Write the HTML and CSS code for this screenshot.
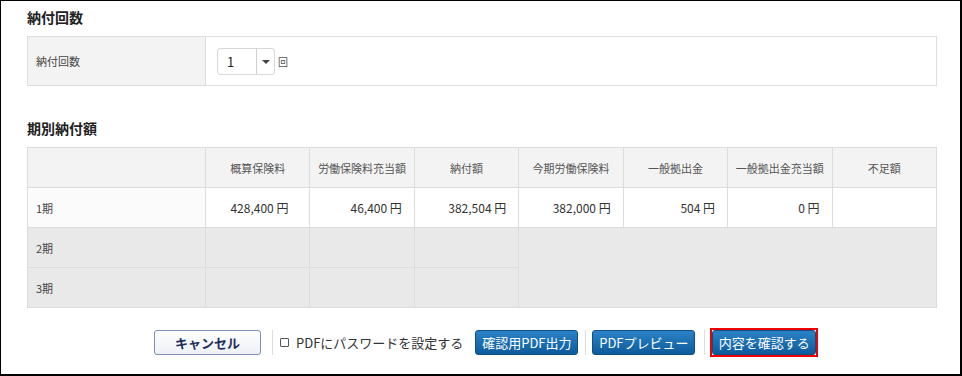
FILE: index.html
```
<!DOCTYPE html>
<html lang="ja">
<head>
    <meta charset="UTF-8">
    <title>納付回数</title>
    <link rel="stylesheet" href="styles.css">
</head>
<body>
<div class="frame">

    <h2 class="section-title">納付回数</h2>
    <div class="field-box">
        <div class="field-label">納付回数</div>
        <div class="field-value">
            <div class="select-box">
                <span class="select-text">1</span>
                <span class="select-arrow"></span>
            </div>
            <span class="unit">回</span>
        </div>
    </div>

    <h2 class="section-title second">期別納付額</h2>
    <table class="pay-table">
        <colgroup>
            <col class="col-label">
            <col><col><col><col><col><col><col>
        </colgroup>
        <thead>
            <tr>
                <th></th>
                <th>概算保険料</th>
                <th>労働保険料充当額</th>
                <th>納付額</th>
                <th>今期労働保険料</th>
                <th>一般拠出金</th>
                <th>一般拠出金充当額</th>
                <th>不足額</th>
            </tr>
        </thead>
        <tbody>
            <tr class="row-active">
                <td class="label">1期</td>
                <td class="num first">428,400 円</td>
                <td class="num">46,400 円</td>
                <td class="num">382,504 円</td>
                <td class="num">382,000 円</td>
                <td class="num">504 円</td>
                <td class="num">0 円</td>
                <td class="num"></td>
            </tr>
            <tr class="row-off">
                <td class="label">2期</td>
                <td></td>
                <td></td>
                <td></td>
                <td rowspan="2" colspan="4" class="merged"></td>
            </tr>
            <tr class="row-off">
                <td class="label">3期</td>
                <td></td>
                <td></td>
                <td></td>
            </tr>
        </tbody>
    </table>

    <div class="actions">
        <button class="btn btn-cancel">キャンセル</button>
        <span class="sep"></span>
        <label class="pw-check"><span class="box"></span>PDFにパスワードを設定する</label>
        <button class="btn btn-blue">確認用PDF出力</button>
        <span class="sep sep-a"></span>
        <button class="btn btn-blue">PDFプレビュー</button>
        <span class="sep sep-b"></span>
        <span class="highlight"><button class="btn btn-blue">内容を確認する</button></span>
    </div>

</div>
</body>
</html>
```

FILE: styles.css
```
body {
    margin: 0;
    font-family: "Noto Sans CJK JP", "Noto Sans", sans-serif;
    color: #333;
    background-color: #fff;
}

.frame {
    width: 962px;
    height: 376px;
    box-sizing: border-box;
    border: 1px solid #000;
    border-right-width: 2px;
    border-bottom-width: 2px;
    padding: 6px 0 0 26px;
}

.section-title {
    margin: 0 0 9px;
    font-size: 14px;
    line-height: 20px;
    font-weight: 700;
    color: #222;
}

.section-title.second {
    margin-top: 32px;
}

/* 納付回数 */
.field-box {
    display: flex;
    width: 910px;
    height: 50px;
    box-sizing: border-box;
    border: 1px solid #dedede;
}

.field-label {
    width: 178px;
    box-sizing: border-box;
    background-color: #f3f3f3;
    border-right: 1px solid #dedede;
    font-size: 11px;
    color: #444;
    padding-left: 8px;
    display: flex;
    align-items: center;
}

.field-value {
    display: flex;
    align-items: center;
    padding-left: 11px;
}

.select-box {
    display: flex;
    width: 58px;
    height: 27px;
    box-sizing: border-box;
    border: 1px solid #d8d8d8;
    border-radius: 3px;
    background-color: #fff;
}

.select-text {
    width: 39px;
    border-right: 1px solid #cfcfcf;
    font-size: 13px;
    line-height: 25px;
    padding-left: 9px;
    box-sizing: border-box;
    color: #222;
}

.select-arrow {
    flex: 1;
    position: relative;
}

.select-arrow::after {
    content: "";
    position: absolute;
    left: 5px;
    top: 11px;
    border-left: 4px solid transparent;
    border-right: 4px solid transparent;
    border-top: 4px solid #444;
}

.unit {
    font-size: 10px;
    margin-left: 3px;
    color: #555;
}

/* 期別納付額 */
.pay-table {
    width: 910px;
    border-collapse: collapse;
    table-layout: fixed;
    font-size: 11px;
}

.col-label {
    width: 178px;
}

.pay-table th,
.pay-table td {
    border: 1px solid #dcdcdc;
    height: 39px;
    padding: 0;
}

.pay-table th {
    background-color: #f3f3f3;
    font-weight: 400;
    color: #555;
    text-align: center;
}

.pay-table td.label {
    padding-left: 8px;
    color: #444;
}

.pay-table td.num {
    text-align: right;
    padding-right: 12px;
    font-size: 12px;
    color: #333;
}

.pay-table td.num.first {
    padding-right: 21px;
}

.row-active td {
    background-color: #fff;
}

.row-active td.label {
    background-color: #fbfbfb;
}

.row-off td {
    background-color: #e9e9e9;
}

/* ボタン */
.actions {
    display: flex;
    align-items: center;
    margin-top: 20px;
    padding-left: 127px;
    height: 29px;
}

.btn {
    height: 25px;
    font-family: inherit;
    font-size: 13px;
    border-radius: 3px;
    padding: 0;
    cursor: pointer;
}

.btn-cancel {
    width: 107px;
    background: linear-gradient(#ffffff, #eef0f6);
    border: 1px solid #7d8db4;
    color: #1d2d5a;
    font-weight: 700;
}

.btn-blue {
    width: 103px;
    background: linear-gradient(#2b82c6, #0d5c9c);
    border: 1px solid #0b4f87;
    color: #fff;
}

.sep {
    width: 1px;
    height: 25px;
    background-color: #dcdcdc;
    margin: 0 7px 0 11px;
}

.pw-check {
    display: flex;
    align-items: center;
    font-size: 13px;
    color: #333;
    margin-right: 12px;
}

.pw-check .box {
    width: 7px;
    height: 7px;
    border: 1px solid #555;
    border-radius: 1px;
    margin-right: 7px;
}

.sep.sep-a {
    margin: 0 6px 0 7px;
}

.sep.sep-b {
    margin: 0 5px 0 9px;
}

.highlight {
    display: flex;
    border: 2px solid #e00;
}

.highlight .btn {
    width: 104px;
}
```
